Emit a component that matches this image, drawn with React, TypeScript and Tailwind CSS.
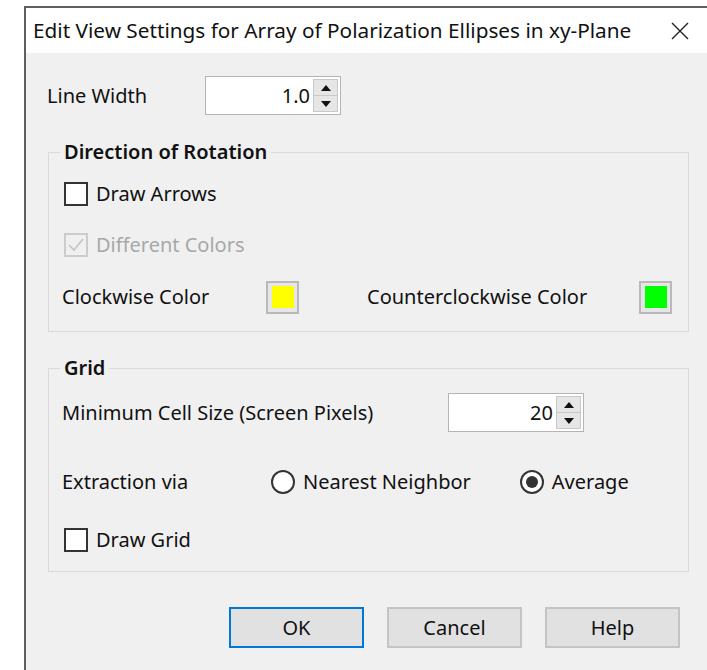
import React from "react";

const font = { fontFamily: '"Noto Sans", "Open Sans", sans-serif' };

function SpinBox({ value, width }: { value: string; width: string }) {
  return (
    <div className={`flex h-[39px] ${width} items-stretch border border-[#b4b4b4] bg-white`}>
      <div className="flex flex-1 items-center justify-end pr-[3px] text-[20px] text-[#111]">{value}</div>
      <div className="my-[2px] mr-[2px] flex w-[25px] flex-col border border-[#c8c8c8] bg-[#e6e6e6]">
        <div className="flex flex-1 items-center justify-center border-b border-[#c8c8c8]">
          <svg width="10" height="6" viewBox="0 0 10 6">
            <path d="M5 0 L10 6 L0 6 Z" fill="#111" />
          </svg>
        </div>
        <div className="flex flex-1 items-center justify-center">
          <svg width="10" height="6" viewBox="0 0 10 6">
            <path d="M0 0 L10 0 L5 6 Z" fill="#111" />
          </svg>
        </div>
      </div>
    </div>
  );
}

function CheckBox({ label, checked, disabled }: { label: string; checked?: boolean; disabled?: boolean }) {
  return (
    <div className="flex items-center gap-[8px]">
      <div
        className={`flex h-[24px] w-[24px] items-center justify-center border-2 ${
          disabled ? "border-[#cccccc] bg-[#f0f0f0]" : "border-[#333333] bg-white"
        }`}
      >
        {checked && (
          <svg width="18" height="16" viewBox="0 0 18 16">
            <path d="M2 8 L7 13 L16 2" fill="none" stroke={disabled ? "#c4c4c4" : "#222"} strokeWidth="1.6" />
          </svg>
        )}
      </div>
      <span className={disabled ? "text-[#a8a8a8]" : "text-[#111]"}>{label}</span>
    </div>
  );
}

function Radio({ label, checked }: { label: string; checked?: boolean }) {
  return (
    <div className="flex items-center gap-[8px]">
      <div className="flex h-[24px] w-[24px] items-center justify-center rounded-full border-2 border-[#333333] bg-white">
        {checked && <div className="h-[12px] w-[12px] rounded-full bg-[#333333]" />}
      </div>
      <span className="text-[#111]">{label}</span>
    </div>
  );
}

function Swatch({ color }: { color: string }) {
  return (
    <div className="flex h-[33px] w-[33px] items-center justify-center border-2 border-[#b9b9b9] bg-[#e6e6e6]">
      <div className={`h-[22px] w-[22px] ${color}`} />
    </div>
  );
}

function Button({ label, primary }: { label: string; primary?: boolean }) {
  return (
    <button
      className={`h-[41px] w-[135px] bg-[#e1e1e1] text-[20px] text-[#111] ${
        primary ? "border-2 border-[#0078d7]" : "border-2 border-[#c4c4c4]"
      }`}
    >
      {label}
    </button>
  );
}

export default function App() {
  return (
    <div className="h-[670px] w-[707px] overflow-hidden bg-white pt-[6px] pl-[24px]" style={font}>
      <div className="flex h-[664px] flex-col border-t-2 border-l-2 border-[#5f5f5f]">
        {/* Title bar */}
        <div className="flex h-[45px] items-center justify-between bg-white pl-[7px] pr-[18px]">
          <span className="text-[20.75px] text-[#111]">Edit View Settings for Array of Polarization Ellipses in xy-Plane</span>
          <svg width="18" height="18" viewBox="0 0 18 18">
            <path d="M1 1 L17 17 M17 1 L1 17" stroke="#222" strokeWidth="1.4" />
          </svg>
        </div>

        {/* Body */}
        <div className="flex flex-1 flex-col bg-[#f0f0f0] pl-[22px] text-[20px] text-[#111]">
          <div className="mt-[23px] flex items-center">
            <span className="-ml-[1px] w-[158px]">Line Width</span>
            <SpinBox value="1.0" width="w-[136px]" />
          </div>

          <fieldset className="mt-[22px] w-[641px] border border-[#dadada] px-[15px] pb-[8px]">
            <legend className="-ml-[4px] px-[4px] font-semibold">Direction of Rotation</legend>
            <div className="flex h-[52px] items-center pt-[2px]">
              <CheckBox label="Draw Arrows" />
            </div>
            <div className="flex h-[52px] items-center">
              <CheckBox label="Different Colors" checked disabled />
            </div>
            <div className="flex h-[52px] items-center">
              <span className="-ml-[2px] w-[204px]">Clockwise Color</span>
              <Swatch color="bg-[#ffff00]" />
              <span className="ml-[68px] w-[272px]">Counterclockwise Color</span>
              <Swatch color="bg-[#00ff00]" />
            </div>
          </fieldset>

          <fieldset className="mt-[21px] w-[641px] border border-[#dadada] px-[15px] pb-[13px]">
            <legend className="-ml-[4px] px-[4px] font-semibold">Grid</legend>
            <div className="flex h-[59px] items-center">
              <span className="-ml-[2px] w-[386px]">Minimum Cell Size (Screen Pixels)</span>
              <SpinBox value="20" width="w-[136px]" />
            </div>
            <div className="flex h-[80px] items-center">
              <span className="-ml-[2px] w-[209px]">Extraction via</span>
              <Radio label="Nearest Neighbor" />
              <div className="ml-[49px]">
                <Radio label="Average" checked />
              </div>
            </div>
            <div className="flex h-[36px] items-center">
              <CheckBox label="Draw Grid" />
            </div>
          </fieldset>

          <div className="mt-[35px] flex gap-[23px] pl-[181px]">
            <Button label="OK" primary />
            <Button label="Cancel" />
            <Button label="Help" />
          </div>
        </div>
      </div>
    </div>
  );
}
